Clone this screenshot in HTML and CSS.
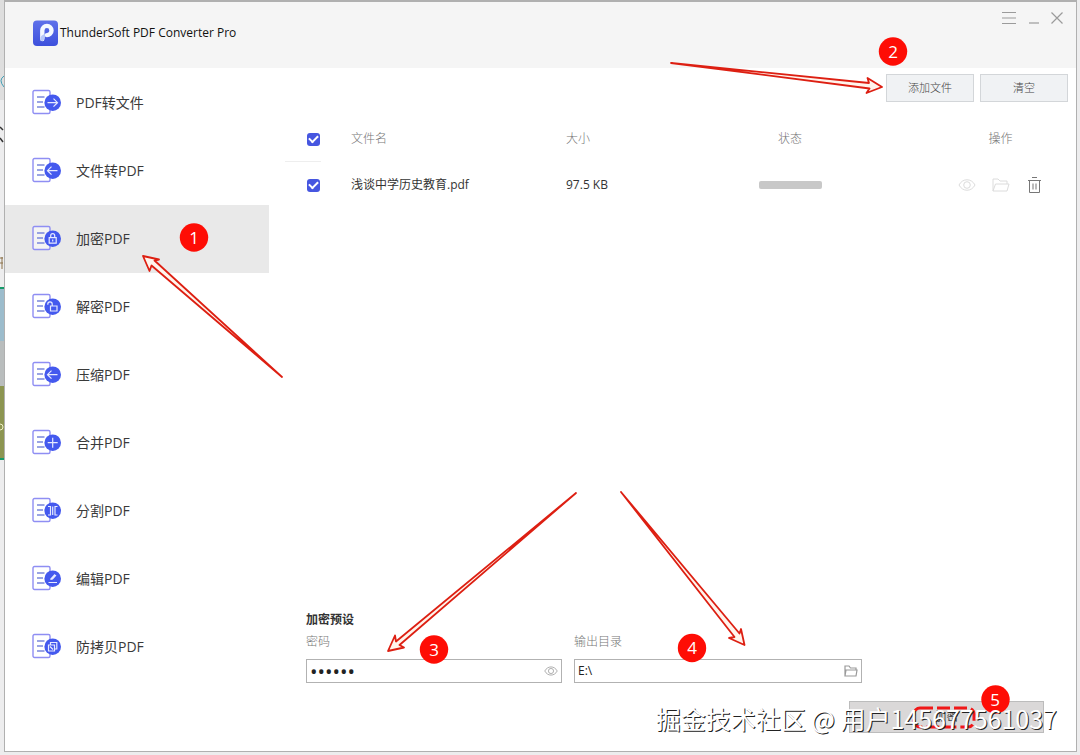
FILE: index.html
```html
<!DOCTYPE html>
<html lang="zh-CN">
<head>
<meta charset="utf-8">
<title>ThunderSoft PDF Converter Pro</title>
<link rel="stylesheet" href="styles.css">
</head>
<body>
<svg width="0" height="0" class="defs" aria-hidden="true">
  <defs>
    <linearGradient id="logo-fill" x1="0" y1="0" x2="0" y2="1"><stop offset="0" stop-color="#5f71ea"/><stop offset="1" stop-color="#3d50dc"/></linearGradient>
    <symbol id="page" viewBox="0 0 30 26">
      <rect x="1" y="1.500" width="17" height="23" rx="1.500" fill="#fff" fill-opacity=".5" stroke="#8f8ef3" stroke-width="1.400"/>
      <path d="M5 8h7.500M5 13h6M5 18h7.500" stroke="#7a86dc" stroke-width="1.300"/>
      <circle cx="20.700" cy="13.700" r="8.300" fill="#4459ee"/>
    </symbol>
    <symbol id="eye" viewBox="0 0 18 14">
      <path d="M1 7c3.600-7 12.400-7 16 0-3.600 7-12.400 7-16 0z" fill="none" stroke="currentColor"/>
      <circle cx="9" cy="7" r="3.300" fill="none" stroke="currentColor"/>
    </symbol>
    <symbol id="folder" viewBox="0 0 18 14">
      <path d="M1 13V1h5l2 2h7v3M1 13l2.500-7H17l-2 7z" fill="none" stroke="currentColor"/>
    </symbol>
    <symbol id="folder-small" viewBox="0 0 14 12">
      <path d="M1 11V1h4l1.500 2h5.500v2M1 11l1-6h11l-1 6z" fill="none" stroke="currentColor" stroke-width="1.200"/>
    </symbol>
  </defs>
</svg>
<div class="window">
  <header class="titlebar">
    <svg class="logo" width="26" height="26" viewBox="0 0 26 26" aria-hidden="true">
      <rect y=".5" width="25" height="25.500" rx="4" fill="url(#logo-fill)"/>
      <path d="M9.300 19V10.500a4.600 4.600 0 1 1 4.600 4.600" fill="none" stroke="#f4f8ff" stroke-width="4.400" stroke-linecap="round"/>
      <path d="M7.300 19.300c0-3 2-4.600 4.500-5.200l.2 3c-.7 1-.5 3-2.500 3.800-1.200.3-2.200-.5-2.200-1.600z" fill="#b7c8fa"/>
    </svg>
    <h1>ThunderSoft PDF Converter Pro</h1>
    <div class="controls">
      <button type="button" aria-label="菜单"><svg width="16" height="14"><path d="M1 1.500h14M1 7h14M1 12.500h14" stroke="#9b9b9b" stroke-width="1.200"/></svg></button>
      <button type="button" aria-label="最小化"><svg width="12" height="14"><path d="M1 12h10" stroke="#9b9b9b" stroke-width="1.200"/></svg></button>
      <button type="button" aria-label="关闭"><svg width="12" height="14"><path d="M.5 1.500l11 11M11.500 1.500l-11 11" stroke="#9b9b9b" stroke-width="1.200"/></svg></button>
    </div>
  </header>
  <div class="body">
    <nav class="sidebar">
      <a href="#to-file"><svg width="30" height="26"><use href="#page"/><path d="M15.500 13.700h10M21.500 9.700l4 4-4 4" class="glyph"/></svg>PDF转文件</a>
      <a href="#to-pdf"><svg width="30" height="26"><use href="#page"/><path d="M25.500 13.700h-10M19.500 9.700l-4 4 4 4" class="glyph"/></svg>文件转PDF</a>
      <a href="#encrypt" class="active" aria-current="page"><svg width="30" height="26"><use href="#page"/><path d="M17.200 12.700h7v5.500h-7zM18.700 12.700v-2a2 2 0 0 1 4 0v2M20.700 14.500v2" class="glyph"/></svg>加密PDF</a>
      <a href="#decrypt"><svg width="30" height="26"><use href="#page"/><path d="M18.500 13h6.500v5h-6.500zM20.200 13v-2a2.200 2.200 0 0 0-4.400 0v.8" class="glyph"/></svg>解密PDF</a>
      <a href="#compress"><svg width="30" height="26"><use href="#page"/><path d="M25.500 13.700h-10M19.500 9.700l-4 4 4 4" class="glyph"/></svg>压缩PDF</a>
      <a href="#merge"><svg width="30" height="26"><use href="#page"/><path d="M15.700 13.700h10M20.700 8.700v10" class="glyph"/></svg>合并PDF</a>
      <a href="#split"><svg width="30" height="26"><use href="#page"/><path d="M16 9.500h2.500v8.500H16M25.500 9.500H23v8.500h2.500M20.700 9.500v8.500" class="glyph"/></svg>分割PDF</a>
      <a href="#edit"><svg width="30" height="26"><use href="#page"/><path d="M16.500 17.500h8.500M18.500 14.500l4.500-5M18.500 14.500l2-.5 3.500-3.800" class="glyph"/></svg>编辑PDF</a>
      <a href="#protect"><svg width="30" height="26"><use href="#page"/><path d="M16.500 12h6v6h-6zM18.500 12V9.500h6.300V16h-2.300M18 13.500l3 3" class="glyph"/></svg>防拷贝PDF</a>
    </nav>
    <main class="content">
      <div class="toolbar">
        <button type="button">添加文件</button>
        <button type="button">清空</button>
      </div>
      <div class="files">
        <table>
          <colgroup><col class="col-check"><col><col class="col-size"><col class="col-status"><col class="col-actions"></colgroup>
          <thead>
            <tr>
              <th class="check"><input type="checkbox" checked aria-label="全选"></th>
              <th>文件名</th><th>大小</th><th class="center">状态</th><th class="center">操作</th>
            </tr>
          </thead>
          <tbody>
            <tr>
              <td class="check"><input type="checkbox" checked aria-label="浅谈中学历史教育.pdf"></td>
              <td>浅谈中学历史教育.pdf</td>
              <td>97.5 KB</td>
              <td><div class="progress"></div></td>
              <td>
                <div class="actions">
                  <button type="button" class="faint" aria-label="预览"><svg width="18" height="14"><use href="#eye"/></svg></button>
                  <button type="button" class="faint" aria-label="打开文件夹"><svg width="18" height="14"><use href="#folder"/></svg></button>
                  <button type="button" aria-label="删除"><svg width="18" height="18" viewBox="0 0 18 18"><path d="M6 1.500h5M2 4.500h13M3.500 4.500v12h10v-12M7 7.500v6M10 7.500v6" fill="none" stroke="#777"/></svg></button>
                </div>
              </td>
            </tr>
          </tbody>
        </table>
      </div>
      <form class="preset">
        <h2>加密预设</h2>
        <div class="fields">
          <div class="field password">
            <label for="pwd">密码</label>
            <div class="box"><input id="pwd" type="password" value="123456"><button type="button" aria-label="显示密码"><svg width="14" height="12"><use href="#eye"/></svg></button></div>
          </div>
          <div class="field output">
            <label for="out">输出目录</label>
            <div class="box"><input id="out" type="text" value="E:\"><button type="button" aria-label="选择目录"><svg width="14" height="12"><use href="#folder-small"/></svg></button></div>
          </div>
        </div>
        <button type="button" class="submit">加密</button>
      </form>
    </main>
  </div>
</div>
<svg class="backdrop" width="4" height="755" aria-hidden="true">
  <rect width="4" height="100" fill="#dedede"/>
  <path d="M4 76q-6 4 0 11" fill="none" stroke="#3f9db5"/>
  <path d="M0 127l3 3M0 138l3 4" stroke="#333" stroke-width="1.500"/>
  <path d="M0 258h3M0 263h3M2 257v12" stroke="#8a7148"/>
  <rect y="287" width="4" height="54" fill="#9cbccc"/>
  <rect y="341" width="4" height="45" fill="#b9bdbd"/>
  <rect y="386" width="4" height="74" fill="#8c9551"/>
  <path d="M0 288h4M0 459h4" stroke="#159a68" stroke-width="2"/>
  <circle cx="0" cy="427" r="3" fill="none" stroke="#f1f1c8"/>
</svg>
<svg class="notes" width="1080" height="755" viewBox="0 0 1080 755">
  <g class="arrows">
    <path d="M282 377L154.500 260.500 159 259.500 143 256 149.500 271 151.500 265.500z"/>
    <path d="M671 63L869 83 867.500 78 882 87 866.500 93 869.500 88.500z"/>
    <path d="M576 493L396 641.500 395 635.500 388 651 404 647.500 399.500 645z"/>
    <path d="M621 492L739.500 633.500 741 629 744.500 645 729 638 734.500 637z"/>
  </g>
  <rect x="914" y="708" width="60" height="19" rx="6" class="dashed"/>
  <g class="badges">
    <circle cx="194" cy="237.500" r="14.200"/><text x="194" y="244">1</text>
    <circle cx="893" cy="51.500" r="14.200"/><text x="893" y="58">2</text>
    <circle cx="434" cy="649.500" r="14.200"/><text x="434" y="656">3</text>
    <circle cx="692" cy="648" r="14.200"/><text x="692" y="654">4</text>
    <circle cx="995.500" cy="699.500" r="14.200"/><text x="995" y="706">5</text>
  </g>
</svg>
<p class="watermark">掘金技术社区 @ 用户145677561037</p>
</body>
</html>
```
FILE: styles.css
```css
* { box-sizing: border-box; }

body {
  position: relative;
  display: flex;
  min-height: 100vh;
  margin: 0;
  padding: 0 3px 3px 4px;
  background: #ededee;
  color: #333;
  font: 12px/18px "Open Sans", "Noto Sans CJK SC", sans-serif;
}

h1, h2, p { margin: 0; font-weight: 400; }

button {
  padding: 0;
  border: 0;
  background: none;
  color: inherit;
  font: inherit;
}

svg { display: block; }

.defs, .backdrop, .notes { position: absolute; top: 0; left: 0; }

.notes { pointer-events: none; }

.window {
  flex: 1;
  display: flex;
  flex-direction: column;
  border: 1px solid #b0b0b0;
  border-top-width: 2px;
  background: #fff;
}

.titlebar {
  display: flex;
  align-items: center;
  gap: 1px;
  height: 66px;
  padding: 0 13px 4px 28px;
  background: #f5f5f5;
}

.titlebar h1 {
  flex: 1;
  color: #111;
  font-size: 12px;
}

.controls {
  display: flex;
  align-self: flex-start;
  gap: 11px;
  padding-top: 9px;
}

.body { flex: 1; display: flex; }

.sidebar {
  width: 264px;
  padding-top: 1px;
}

.sidebar a {
  display: flex;
  align-items: center;
  gap: 14px;
  height: 68px;
  padding-left: 27px;
  color: #3a3a3a;
  font-size: 14px;
  text-decoration: none;
}

.sidebar svg { margin-bottom: 2px; }

.sidebar .active { background: #e9e9e9; }

.glyph { fill: none; stroke: #e6eaff; stroke-width: 1.2px; }

.content {
  flex: 1;
  display: flex;
  flex-direction: column;
}

.toolbar {
  display: flex;
  justify-content: flex-end;
  gap: 6px;
  padding: 6px 8px 14px;
}

.toolbar button {
  width: 88px;
  height: 28px;
  border: 1px solid #d3d6d9;
  background: #f0f2f4;
  color: #444;
  font-size: 11px;
  font-weight: 300;
}

.files { flex: 1; padding: 0 14px 0 16px; }

table {
  width: 100%;
  border-collapse: collapse;
  table-layout: fixed;
}

th, td {
  height: 46px;
  padding: 0 8px;
  text-align: left;
}

th { color: #777; font-weight: 300; }
th.center { text-align: center; }

.col-check { width: 58px; }
.col-size { width: 83px; }
.col-status { width: 298px; }
.col-actions { width: 123px; }

th.check, td.check { padding: 0 0 0 22px; }

th.check {
  background: linear-gradient(#eee, #eee) left bottom / 36px 1px no-repeat;
}

.check input {
  appearance: none;
  display: grid;
  place-items: center;
  width: 13px;
  height: 13px;
  margin: 0;
  border-radius: 3px;
  background: #4656e0;
}

.check input:checked::before {
  content: "";
  width: 7px;
  height: 4px;
  border: solid #fff;
  border-width: 0 0 2px 2px;
  transform: translateY(-1px) rotate(-45deg);
}

.progress {
  width: 63px;
  height: 8px;
  margin: 0 auto;
  border-radius: 2px;
  background: #c8c8c8;
}

.actions {
  display: flex;
  align-items: center;
  justify-content: center;
  gap: 16px;
}

.faint { color: #dcdcdc; }

.preset {
  display: flex;
  flex-direction: column;
  padding: 0 32px 18px 37px;
}

.preset h2 {
  font-size: 12px;
  font-weight: 700;
  line-height: 20px;
}

.fields { display: flex; gap: 12px; margin-right: 182px; }
.field { display: flex; flex-direction: column; gap: 8px; min-width: 0; }
.password { flex: 256; }
.output { flex: 288; }

.field label {
  padding-top: 3px;
  color: #777;
  font-weight: 300;
  line-height: 18px;
}

.box {
  display: flex;
  align-items: center;
  height: 24px;
  padding: 0 3px;
  border: 1px solid #b2b2b2;
  background: #fff;
  color: #999;
}

.box input {
  flex: 1;
  min-width: 0;
  padding: 0;
  border: 0;
  outline: 0;
  background: none;
  color: #222;
  font: inherit;
}

.box input[type="password"] { height: 20px; font-size: 20px; }

.submit {
  align-self: flex-end;
  width: 195px;
  height: 32px;
  margin-top: 18px;
  border: 1px solid #bcbcbc;
  background: #dad8d8;
  color: #444;
}

.arrows path {
  fill: #fff4ec;
  stroke: #dd1f12;
  stroke-width: 1.8px;
  stroke-linejoin: round;
}

.dashed {
  fill: none;
  stroke: #f01818;
  stroke-width: 3px;
  stroke-dasharray: 13 4;
}

.badges circle { fill: #fe0d05; }

.badges text {
  fill: #fff;
  font-size: 17px;
  text-anchor: middle;
}

.watermark {
  position: absolute;
  right: 23px;
  bottom: 21px;
  color: #fff;
  font: 400 25px/32px "Noto Sans CJK SC", sans-serif;
  text-shadow: 1px 1px 0 #222;
  white-space: nowrap;
}
```
